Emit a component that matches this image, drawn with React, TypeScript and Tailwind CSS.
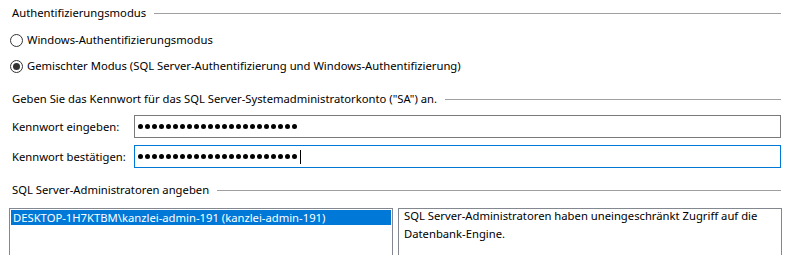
import { useState } from 'react';

const font = { fontFamily: '"Noto Sans", "Liberation Sans", sans-serif' };

const GroupHeader = ({ title }: { title: string }) => (
  <div className="flex items-center h-[26px] pl-[12px] pr-[10px]">
    <span className="whitespace-nowrap">{title}</span>
    <div className="flex-1 h-px bg-[#a0a0a0] ml-[8px]" />
  </div>
);

const Radio = ({ checked, label }: { checked: boolean; label: string }) => (
  <div className="flex items-center h-[26px] pl-[10px]">
    <span className="w-[13px] h-[13px] rounded-full border border-[#333333] bg-white flex items-center justify-center">
      {checked && <span className="w-[7px] h-[7px] rounded-full bg-[#333333]" />}
    </span>
    <span className="ml-[4px] whitespace-nowrap">{label}</span>
  </div>
);

const Dots = ({ count, caret }: { count: number; caret?: boolean }) => (
  <div className="flex items-center gap-[2px] pl-[3px]" aria-label="Kennwort">
    {Array.from({ length: count }).map((_, i) => (
      <span key={i} className="w-[5px] h-[5px] rounded-full bg-black" />
    ))}
    {caret && <span className="w-px h-[14px] bg-black ml-[1px]" />}
  </div>
);

export default function App() {
  const [mode] = useState<'windows' | 'mixed'>('mixed');

  return (
    <div className="w-[791px] h-[255px] bg-white overflow-hidden text-[11.25px] leading-[16px] text-black" style={font}>
      <GroupHeader title="Authentifizierungsmodus" />
      <div className="mt-px">
        <Radio checked={mode === 'windows'} label="Windows-Authentifizierungsmodus" />
        <Radio checked={mode === 'mixed'} label="Gemischter Modus (SQL Server-Authentifizierung und Windows-Authentifizierung)" />
      </div>

      <div className="mt-[7px]">
        <GroupHeader title={'Geben Sie das Kennwort für das SQL Server-Systemadministratorkonto ("SA") an.'} />
      </div>
      <div className="flex items-center mt-[3px] pl-[12px] pr-[10px]">
        <span className="w-[122px] whitespace-nowrap">Kennwort eingeben:</span>
        <div className="flex-1 h-[23px] border border-[#7a7a7a] flex items-center">
          <Dots count={23} />
        </div>
      </div>
      <div className="flex items-center mt-[7px] pl-[12px] pr-[10px]">
        <span className="w-[122px] whitespace-nowrap">Kennwort bestätigen:</span>
        <div className="flex-1 h-[23px] border border-[#0078d7] flex items-center">
          <Dots count={23} caret />
        </div>
      </div>

      <div className="mt-[9px]">
        <GroupHeader title="SQL Server-Administratoren angeben" />
      </div>
      <div className="flex mt-[5px] pl-[9px] pr-[9px] gap-[5px]">
        <div className="w-[384px] h-[80px] border border-[#828790] p-px">
          <div className="h-[15px] bg-[#0078d7] text-white pl-[2px] flex items-center whitespace-nowrap">
            DESKTOP-1H7KTBM\kanzlei-admin-191 (kanzlei-admin-191)
          </div>
        </div>
        <div className="flex-1 h-[80px] border border-[#828790] pl-[5px] leading-[18px]">
          <p className="-mt-[2px]">
            SQL Server-Administratoren haben uneingeschränkt Zugriff auf die
            <br />
            Datenbank-Engine.
          </p>
        </div>
      </div>
    </div>
  );
}
